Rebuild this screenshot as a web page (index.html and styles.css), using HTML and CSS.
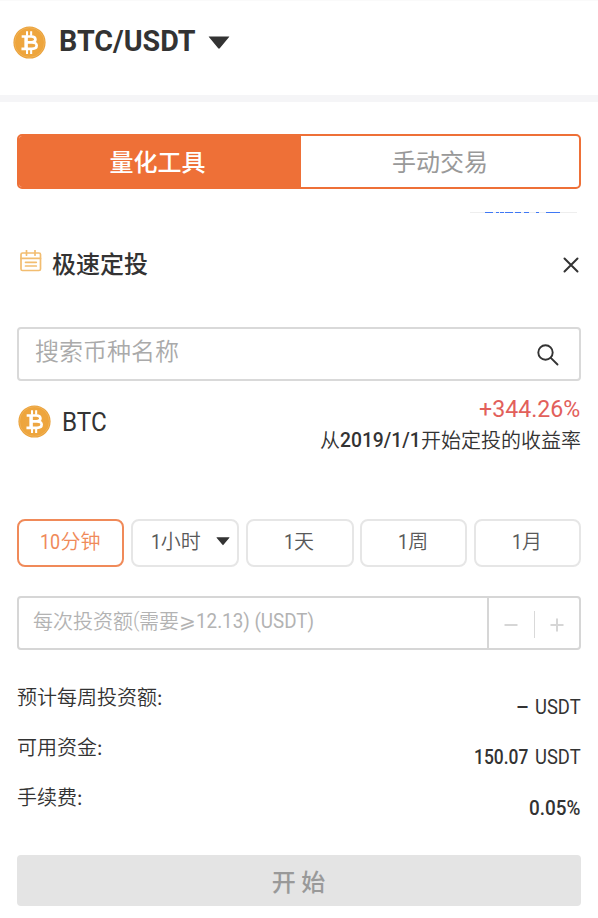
FILE: index.html
```html
<!DOCTYPE html>
<html lang="zh-CN">
<head>
<meta charset="utf-8">
<title>BTC/USDT</title>
<link rel="stylesheet" href="styles.css">
</head>
<body>
<svg class="defs" width="0" height="0">
  <defs>
    <radialGradient id="gold"><stop offset="0" stop-color="#eda744"/><stop offset=".82" stop-color="#eea53c"/><stop offset="1" stop-color="#e9a038"/></radialGradient>
    <symbol id="coin" viewBox="0 0 32 32">
      <circle cx="16" cy="16" r="15.6" fill="url(#gold)"/>
      <circle cx="16" cy="16" r="14.4" fill="none" stroke="#f3bb68" stroke-width=".6"/>
      <g fill="none" stroke="#fff">
        <path d="M8.4 10.2h9.3c5.4 0 5.4 5.6 0 5.6h-5M12.6 15.8h5.8c6.1 0 6 6.3 0 6.3H8.2" stroke-width="2.6"/>
        <path d="M12.7 10v12" stroke-width="3.4"/>
        <path d="M13.6 5v4.5M17.6 5v4.5M13.6 22.5v4.7M17.6 22.5v4.7" stroke-width="2"/>
      </g>
    </symbol>
  </defs>
</svg>
<header class="header">
  <svg class="coin"><use href="#coin"/></svg>
  <h1 class="pair"><span class="din">BTC/USDT</span></h1>
  <svg class="caret" viewBox="0 0 22 14"><path d="M1 .5h20q.6 0 .1.6L11.8 12.3q-.8.9-1.6 0L.9 1.1Q.4.5 1 .5z"/></svg>
</header>
<main class="panel">
  <nav class="tabs">
    <div class="tab active">量化工具</div>
    <div class="tab">手动交易</div>
  </nav>
  <svg class="link-edge" viewBox="0 0 107 2">
    <path d="M0 .5h107" stroke="#eee"/>
    <path d="M15 .5h8M26 .5h3M30 .5h4M35 .5h8M45 .5h6M54 .5h5M66 .5h3M76 .5h14" stroke="#3f78f5"/>
  </svg>
  <section class="heading">
    <svg class="calendar" viewBox="0 0 22 22"><rect x="1" y="3" width="19.5" height="17.5" rx="1.5"/><path d="M1 8.4h19.5M6.5.4v4.8M15 .4v4.8M5.5 12.3h10.8M5.5 16h10.8"/></svg>
    <h2>极速定投</h2>
    <svg class="close" viewBox="0 0 16 16"><path d="M1.5 1.5l13 13M14.5 1.5l-13 13"/></svg>
  </section>
  <div class="search">
    <span>搜索币种名称</span>
    <svg viewBox="0 0 22 22"><circle cx="8.5" cy="8.5" r="7.2"/><path d="M13.8 13.8l6.7 6.7"/></svg>
  </div>
  <section class="asset">
    <svg class="coin"><use href="#coin"/></svg>
    <span class="symbol"><span class="din">BTC</span></span>
    <div class="yield">
      <div class="gain"><span class="din">+344.26%</span></div>
      <div class="since">从<span class="date"><span class="din">2019/1/1</span></span>开始定投的收益率</div>
    </div>
  </section>
  <div class="periods">
    <div class="chip active"><span class="ten"><span class="din">10</span></span>分钟</div>
    <div class="chip hour"><span class="one din">1</span>小时<svg class="caret" viewBox="0 0 22 14"><path d="M1 .5h20q.6 0 .1.6L11.8 12.3q-.8.9-1.6 0L.9 1.1Q.4.5 1 .5z"/></svg></div>
    <div class="chip"><span class="one din">1</span>天</div>
    <div class="chip"><span class="one din">1</span>周</div>
    <div class="chip"><span class="one din">1</span>月</div>
  </div>
  <div class="amount">
    <div class="hint">每次投资额<span class="paren">(</span>需要<span class="geq">⩾</span><span class="range"><span class="din">12.13) (USDT)</span></span></div>
    <div class="stepper">
      <svg viewBox="0 0 14 14"><path d="M.5 7h13"/></svg>
      <i></i>
      <svg viewBox="0 0 14 14"><path d="M.5 7h13M7 .5v13"/></svg>
    </div>
  </div>
  <dl class="summary">
    <div><dt>预计每周投资额:</dt><dd><span class="dash">–</span><span class="unit"><span class="din">USDT</span></span></dd></div>
    <div><dt>可用资金:</dt><dd><span class="funds"><span class="din">150.07</span></span><span class="unit"><span class="din">USDT</span></span></dd></div>
    <div><dt>手续费:</dt><dd><span class="fee"><span class="din">0.05%</span></span></dd></div>
  </dl>
  <button class="start">开 始</button>
</main>
</body>
</html>
```
FILE: styles.css
```css
* { box-sizing: border-box; }
body { margin: 0; background: #fff; color: #333; font-family: "Noto Sans CJK SC", sans-serif; font-size: 20px; font-weight: 350; }
.defs { position: absolute; }
h1, h2, dl, dd { margin: 0; font-weight: inherit; }
svg { display: block; flex: none; }
.din { display: inline-block; font-family: Roboto, sans-serif; line-height: 24px; white-space: nowrap; transform-origin: 0 50%; font-weight: 400; }
.header { height: 102px; border-bottom: 7px solid #f5f5f7; border-top: 1px solid #fafafa; padding: 25px 13px 0; display: flex; align-items: flex-start; }
.coin { width: 33px; height: 33px; }
.pair { display: flex; width: 149px; margin-left: 13px; height: 32px; line-height: 30px; }
.pair .din { font-size: 30px; font-weight: 700; line-height: 30px; transform: scaleX(.955); }
.header .caret { width: 22px; height: 14px; margin-top: 10px; }
.caret { fill: #333; }
.panel { padding: 32px 17px 0; }
.tabs { display: flex; height: 55px; border: 2px solid #ee7037; border-radius: 5px; overflow: hidden; font-size: 24px; line-height: 49px; text-align: center; color: #999; font-weight: 400; }
.tab { width: 278px; }
.tab.active { width: 282px; padding-right: 5px; background: #ee7037; color: #fff; font-weight: 500; }
.link-edge { width: 107px; height: 2px; margin: 23px 0 0 453px; }
.heading { display: flex; height: 60px; margin-top: 20px; padding-left: 3px; align-items: flex-start; }
.heading h2 { font-size: 24px; font-weight: 500; line-height: 36px; height: 36px; margin: 11px auto 0 10px; }
.calendar { width: 22px; height: 22px; margin-top: 16px; fill: none; stroke: #f2bd70; stroke-width: 1.7; stroke-linecap: round; }
.close { width: 16px; height: 16px; margin: 23px 2px 0 0; stroke: #333; stroke-width: 2; stroke-linecap: round; }
.search { display: flex; justify-content: space-between; height: 54px; margin-top: 33px; padding: 0 20px 0 16px; border: 2px solid #d9d9d9; border-radius: 4px; font-size: 24px; line-height: 42px; color: #aaa; }
.search svg { width: 22px; height: 22px; margin-top: 15px; fill: none; stroke: #333; stroke-width: 1.9; stroke-linecap: round; }
.asset { display: flex; height: 104px; padding: 24px 0 0 1px; }
.symbol { display: flex; margin-left: 11px; height: 34px; line-height: 34px; }
.symbol .din { font-size: 25.5px; line-height: 34px; transform: scaleX(.95); }
.yield { margin: -12px 0 0 auto; }
.gain { display: flex; width: 102px; margin-left: auto; height: 32px; line-height: 32px; color: #e2605b; }
.gain .din { font-size: 24px; line-height: 32px; font-weight: 450; transform: scaleX(.965); }
.since { display: flex; line-height: 30px; height: 30px; }
.date { display: flex; width: 81px; }
.date .din { font-size: 20.5px; font-weight: 500; line-height: 31px; transform: scaleX(.94); }
.periods { display: grid; grid-template-columns: 107px 108px 108px 107px 107px; justify-content: space-between; margin-top: 34px; }
.chip { display: flex; justify-content: center; height: 48px; padding-right: 1px; border: 2px solid #e6e6e6; border-radius: 8px; line-height: 40px; color: #595959; }
.chip .din { line-height: 42px; }
.chip.active { border-color: #f08a59; color: #f08a59; }
.ten { display: flex; width: 21px; }
.ten .din { transform: scaleX(.9); }
.one { width: 10px; transform: scaleX(.9); }
.chip.hour { justify-content: flex-start; padding-left: 18px; }
.hour .caret { width: 14px; height: 9px; margin: 16px 0 0 15px; }
.amount { display: flex; height: 54px; margin-top: 29px; border: 2px solid #d6d6d6; border-radius: 4px; color: #b3b3b3; }
.hint { display: flex; width: 468px; padding-left: 14px; line-height: 45px; }
.hint .din { line-height: 47px; transform: scaleX(.94); }
.paren { width: 6px; font-family: Roboto, sans-serif; line-height: 45px; }
.geq { width: 17px; font-family: "DejaVu Sans", sans-serif; line-height: 46px; }
.range { display: flex; width: 120px; }
.stepper { flex: 1; display: flex; justify-content: space-between; align-items: center; border-left: 2px solid #d6d6d6; padding: 3px 15px 0; }
.stepper svg { width: 14px; height: 14px; fill: none; stroke: #d6d6d6; stroke-width: 2; }
.stepper i { width: 1px; height: 27px; background: #d9d9d9; }
.summary { margin-top: 31px; }
.summary > div { display: flex; justify-content: space-between; height: 50px; }
.summary dt { line-height: 31px; }
.summary dd { display: flex; height: 30px; margin-top: 11px; line-height: 30px; }
.summary dd > span { display: flex; }
.summary .din { line-height: 31px; }
.summary dd .unit { width: 46px; }
.unit .din { transform: scaleX(.92); }
.dash { width: 19px; font-family: Roboto, sans-serif; font-weight: 500; }
.funds { width: 61px; }
.funds .din { font-weight: 500; transform: scaleX(.87); }
.fee { width: 52px; margin-top: 1px; }
.fee .din { font-weight: 500; transform: scaleX(.945); }
.start { display: block; width: 100%; height: 51px; margin-top: 24px; border: 0; border-radius: 4px; background: #e4e4e4; color: #999; font: 500 24px/50px "Noto Sans CJK SC", sans-serif; padding: 0 1px 0 0; }
```
